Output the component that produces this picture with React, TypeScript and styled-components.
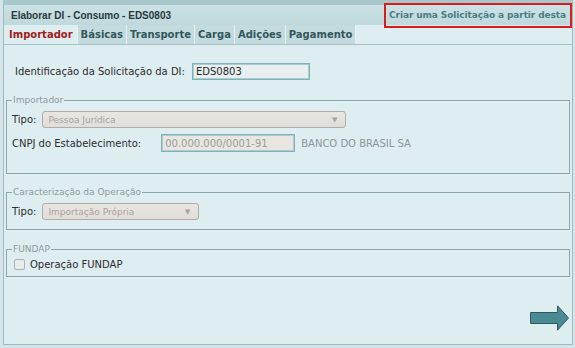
import React from 'react';
import styled, { createGlobalStyle } from 'styled-components';

const Global = createGlobalStyle`
  html, body { margin: 0; padding: 0; }
  body {
    background: #d3e5e8;
    font-family: "DejaVu Sans", Verdana, sans-serif;
    width: 575px;
    height: 348px;
    overflow: hidden;
  }
`;

const Page = styled.div`
  width: 575px;
  height: 348px;
  padding: 0 2px 0 3px;
  box-sizing: border-box;
`;

const Panel = styled.div`
  height: 345px;
  box-sizing: border-box;
  border: 1px solid #9dbcc0;
  border-top: 5px solid #a9c6ca;
  background: #deedf0;
  display: flex;
  flex-direction: column;
`;

const Header = styled.header`
  height: 20px;
  display: flex;
  align-items: center;
  justify-content: space-between;
  padding: 0 6px 0 7px;
  background: linear-gradient(#cbe2e6, #bfd8dc);
`;

const Title = styled.h1`
  margin: 0;
  font: bold 10px "Liberation Sans", Arial, sans-serif;
  color: #27393c;
`;

const CreateLink = styled.span`
  position: relative;
  font: bold 9px "DejaVu Sans", Verdana, sans-serif;
  color: #4d7c82;
  letter-spacing: -0.1px;
  &::after {
    content: '';
    position: absolute;
    left: -5px;
    right: -6px;
    top: -7px;
    bottom: -8px;
    border: 2px solid #d61c1c;
  }
`;

const TabBar = styled.nav`
  display: flex;
  height: 19px;
  border-bottom: 1px solid #a4c3c7;
`;

const Tab = styled.div<{ $active?: boolean }>`
  display: flex;
  align-items: center;
  padding: 0 ${(p) => (p.$active ? '4px 0 5px' : '3px 0 3px')};
  font: bold 10px "DejaVu Sans", Verdana, sans-serif;
  color: ${(p) => (p.$active ? '#a21b1b' : '#33565b')};
  background: ${(p) => (p.$active ? '#deedf0' : '#c3dbdf')};
  border-right: 1px solid #e4f0f2;
`;

const Content = styled.main`
  flex: 1;
  display: flex;
  flex-direction: column;
  padding: 18px 2px 0;
`;

const Row = styled.div<{ $gap: number; $indent?: number }>`
  display: flex;
  align-items: center;
  gap: ${(p) => p.$gap}px;
  padding-left: ${(p) => p.$indent ?? 0}px;
`;

const Label = styled.span`
  font-size: 10px;
  color: #2c2c2c;
`;

const Muted = styled.span`
  font-size: 10px;
  color: #8d9597;
`;

const TextInput = styled.input<{ $w: number; $disabled?: boolean }>`
  width: ${(p) => p.$w}px;
  height: ${(p) => (p.$disabled ? 18 : 17)}px;
  box-sizing: border-box;
  margin: 0;
  padding: 0 3px;
  border: 1px solid #7fb1b7;
  box-shadow: inset 0 0 0 1px #a9cdd1;
  background: ${(p) => (p.$disabled ? '#e9e5e1' : '#e7eff1')};
  font: 10px "DejaVu Sans", Verdana, sans-serif;
  color: ${(p) => (p.$disabled ? '#9a9c9c' : '#2a2a2a')};
  outline: none;
`;

const Select = styled.div<{ $w: number }>`
  width: ${(p) => p.$w}px;
  height: 17px;
  box-sizing: border-box;
  display: flex;
  align-items: center;
  justify-content: space-between;
  padding: 0 8px 0 5px;
  border: 1px solid #b2aca7;
  border-radius: 3px;
  background: linear-gradient(#e9e5e1, #e1ddd9);
  font-size: 9px;
  color: #a9a29d;
`;

const Caret = styled.span`
  font-size: 7px;
  color: #aaa39e;
`;

const Group = styled.fieldset<{ $pt: number; $pb: number; $mt: number }>`
  margin: ${(p) => p.$mt}px 0 0;
  padding: ${(p) => p.$pt}px 5px ${(p) => p.$pb}px;
  border: 1px solid #8aa6a9;
  min-width: 0;
  display: flex;
  flex-direction: column;
  gap: 6px;
`;

const Legend = styled.legend`
  padding: 0 1px;
  font-size: 9px;
  line-height: 11px;
  color: #8e9a9c;
`;

const Check = styled.span`
  width: 9px;
  height: 9px;
  border: 1px solid #b0b0b0;
  border-radius: 2px;
  background: #ebebeb;
  margin-left: 2px;
`;

const Footer = styled.div`
  display: flex;
  justify-content: flex-end;
  margin-top: 28px;
`;

export default function App() {
  return (
    <>
      <Global />
      <Page>
        <Panel>
          <Header>
            <Title>Elaborar DI - Consumo - EDS0803</Title>
            <CreateLink>Criar uma Solicitação a partir desta</CreateLink>
          </Header>
          <TabBar>
            <Tab $active>Importador</Tab>
            <Tab>Básicas</Tab>
            <Tab>Transporte</Tab>
            <Tab>Carga</Tab>
            <Tab>Adições</Tab>
            <Tab>Pagamento</Tab>
          </TabBar>
          <Content>
            <Row $gap={7} $indent={9}>
              <Label>Identificação da Solicitação da DI:</Label>
              <TextInput $w={118} readOnly value="EDS0803" />
            </Row>

            <Group $mt={15} $pt={5} $pb={21}>
              <Legend>Importador</Legend>
              <Row $gap={6}>
                <Label>Tipo:</Label>
                <Select $w={304}>
                  <span>Pessoa Jurídica</span>
                  <Caret>▼</Caret>
                </Select>
              </Row>
              <Row $gap={20}>
                <Label>CNPJ do Estabelecimento:</Label>
                <Row $gap={6}>
                  <TextInput $w={134} $disabled readOnly value="00.000.000/0001-91" />
                  <Muted>BANCO DO BRASIL SA</Muted>
                </Row>
              </Row>
            </Group>

            <Group $mt={13} $pt={5} $pb={9}>
              <Legend>Caracterização da Operação</Legend>
              <Row $gap={6}>
                <Label>Tipo:</Label>
                <Select $w={157}>
                  <span>Importação Própria</span>
                  <Caret>▼</Caret>
                </Select>
              </Row>
            </Group>

            <Group $mt={14} $pt={4} $pb={6}>
              <Legend>FUNDAP</Legend>
              <Row $gap={5}>
                <Check />
                <Label>Operação FUNDAP</Label>
              </Row>
            </Group>

            <Footer>
              <svg width="40" height="26" viewBox="0 0 40 26">
                <polygon
                  points="0.5,7.5 27.5,7.5 27.5,0.8 38.5,13 27.5,25.2 27.5,18.5 0.5,18.5"
                  fill="#4a8b93"
                  stroke="#2b5a60"
                  strokeWidth="1"
                />
              </svg>
            </Footer>
          </Content>
        </Panel>
      </Page>
    </>
  );
}
